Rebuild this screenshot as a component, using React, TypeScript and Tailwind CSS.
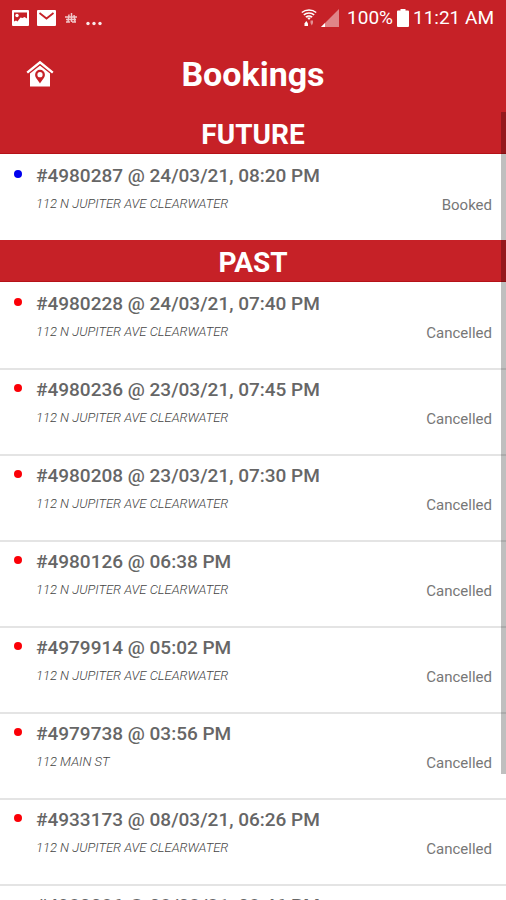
import type { ReactNode } from 'react';

type Booking = {
    id: string;
    when: string;
    address: string;
    status: 'Booked' | 'Cancelled';
};

const future: Booking[] = [
    { id: '4980287', when: '24/03/21, 08:20 PM', address: '112 N JUPITER AVE CLEARWATER', status: 'Booked' },
];

const past: Booking[] = [
    { id: '4980228', when: '24/03/21, 07:40 PM', address: '112 N JUPITER AVE CLEARWATER', status: 'Cancelled' },
    { id: '4980236', when: '23/03/21, 07:45 PM', address: '112 N JUPITER AVE CLEARWATER', status: 'Cancelled' },
    { id: '4980208', when: '23/03/21, 07:30 PM', address: '112 N JUPITER AVE CLEARWATER', status: 'Cancelled' },
    { id: '4980126', when: '06:38 PM', address: '112 N JUPITER AVE CLEARWATER', status: 'Cancelled' },
    { id: '4979914', when: '05:02 PM', address: '112 N JUPITER AVE CLEARWATER', status: 'Cancelled' },
    { id: '4979738', when: '03:56 PM', address: '112 MAIN ST', status: 'Cancelled' },
    { id: '4933173', when: '08/03/21, 06:26 PM', address: '112 N JUPITER AVE CLEARWATER', status: 'Cancelled' },
    { id: '4980086', when: '08/03/21, 08:46 PM', address: '112 N JUPITER AVE CLEARWATER', status: 'Cancelled' },
];

function StatusBar() {
    return (
        <div className="flex h-9 items-center justify-between px-3 text-white">
            <div className="flex items-center gap-2">
                {/* Picture */}
                <svg viewBox="0 0 17 16" className="h-4 w-[17px]">
                    <rect width="17" height="16" rx="1" fill="#fff" />
                    <path d="M2 2.500h13v6l-2.500-1.500-2 1-2-.5-3 4-1.500-1-2 1z" fill="#c62127" />
                    <circle cx="5" cy="5.500" r="1.700" fill="#fff" />
                </svg>
                {/* Mail */}
                <svg viewBox="0 0 19 16" className="h-4 w-[19px]">
                    <rect width="19" height="16" rx="1" fill="#fff" />
                    <path d="M2.500 3l7 5.500 7-5.500" fill="none" stroke="#c62127" strokeWidth="1.800" />
                </svg>
                {/* App notification */}
                <svg viewBox="0 0 14 12" className="h-3 w-[14px]" fill="none" stroke="#fff" strokeWidth="1.500" opacity="0.75">
                    <path d="M1 5h12M2 7.500h10M5 2.500L4 10M7.500 1v9M10 3l1 7M2 10h4M8 10h4" />
                </svg>
                {/* More notifications */}
                <svg viewBox="0 0 16 16" className="h-4 w-4" fill="#fff" opacity="0.9">
                    <circle cx="2" cy="13.500" r="1.700" />
                    <circle cx="8" cy="13.500" r="1.700" />
                    <circle cx="14" cy="13.500" r="1.700" />
                </svg>
            </div>
            <div className="flex items-center gap-1 text-[19px] leading-6">
                {/* Wifi with transfer arrows */}
                <svg viewBox="0 0 16 18" className="h-[18px] w-4" fill="none" stroke="#fff">
                    <path d="M.8 3.500c4-3.300 10.400-3.300 14.400 0M2.800 5.800c3-2.400 7.400-2.400 10.400 0M4.800 8.200c2-1.600 4.400-1.600 6.400 0" strokeWidth="1.500" />
                    <path d="M6 8.500h4L8 11z" fill="#fff" stroke="none" />
                    <path d="M3.500 17v-2.500L5.300 12 7 14.500V17z" fill="#fff" stroke="none" />
                    <path d="M9.500 11.500H12V14l-1.200 2.500L9.500 14z" fill="#fff" stroke="none" opacity=".5" />
                </svg>
                <svg viewBox="0 0 18 18" className="mr-1 h-[18px] w-[18px]">
                    <path d="M18 0v18H0z" fill="#fff" opacity=".45" />
                    <path d="M4 14v4H0z" fill="#fff" />
                </svg>
                <span>100%</span>
                <svg viewBox="0 0 12 18" className="h-[18px] w-3" fill="#fff">
                    <path d="M3.500 0h5v1.500H11a1 1 0 0 1 1 1V17a1 1 0 0 1-1 1H1a1 1 0 0 1-1-1V2.500a1 1 0 0 1 1-1h2.500z" />
                </svg>
                <span>11:21 AM</span>
            </div>
        </div>
    );
}

function HomePinIcon() {
    return (
        <svg viewBox="0 0 28 28" className="h-7 w-7">
            <path d="M4 12.500L14 4.800l10 7.700v14H4z" fill="#fff" />
            <path d="M2 14.200L14 4.600l12 9.600" fill="none" stroke="#c62127" strokeWidth="1.400" />
            <path d="M1.200 12.600L14 2.200l12.800 10.400" fill="none" stroke="#fff" strokeWidth="2.400" />
            <path d="M14 9.800a4.900 4.900 0 0 0-4.900 4.900c0 3.200 3 5.300 4.900 8.800 1.900-3.500 4.900-5.600 4.900-8.800A4.900 4.900 0 0 0 14 9.800z" fill="#c62127" />
            <circle cx="14" cy="14.700" r="2.600" fill="#fff" />
        </svg>
    );
}

function Row({ booking }: { booking: Booking }) {
    const dot = booking.status === 'Booked' ? 'bg-[#0000ee]' : 'bg-[#fb0007]';
    return (
        <li className="flex h-[86px] border-t-2 border-[#e4e4e4] px-3.5 first:border-transparent">
            <span className={`mt-3.5 h-2 w-2 shrink-0 rounded-full ${dot}`} />
            <div className="ml-3.5 grow pt-2">
                <h3 className="text-[19px] leading-6 font-medium text-[#666]">#{booking.id} @ {booking.when}</h3>
                <p className="mt-1 text-[13px] leading-6 font-light text-[#444] italic">{booking.address}</p>
            </div>
            <span className="mt-[39px] text-[15px] leading-5 text-[#777]">{booking.status}</span>
        </li>
    );
}

function Section({ title, children }: { title: string; children: ReactNode }) {
    return (
        <section>
            <h2 className="h-[42px] border-b border-[#b51218] bg-[#c62127] pt-1 text-center text-[28px] leading-[38px] font-bold text-white">
                {title}
            </h2>
            <ul>{children}</ul>
        </section>
    );
}

export default function App() {
    return (
        <main className="flex h-screen flex-col overflow-hidden bg-white font-[Roboto,sans-serif]">
            <header className="shrink-0 bg-[#c62127] text-white">
                <StatusBar />
                <div className="grid h-19 grid-cols-[80px_1fr_80px] items-center">
                    <button type="button" aria-label="Home" className="justify-self-center">
                        <HomePinIcon />
                    </button>
                    <h1 className="text-center text-[34px] leading-10 font-bold">Bookings</h1>
                </div>
            </header>
            <div className="relative min-h-0 grow overflow-hidden">
                <Section title="FUTURE">
                    {future.map((b) => <Row key={b.id} booking={b} />)}
                </Section>
                <Section title="PAST">
                    {past.map((b) => <Row key={b.id} booking={b} />)}
                </Section>
                {/* Scroll thumb */}
                <div className="absolute top-0 right-0 h-[84%] w-[5px] bg-black/25" />
            </div>
        </main>
    );
}
